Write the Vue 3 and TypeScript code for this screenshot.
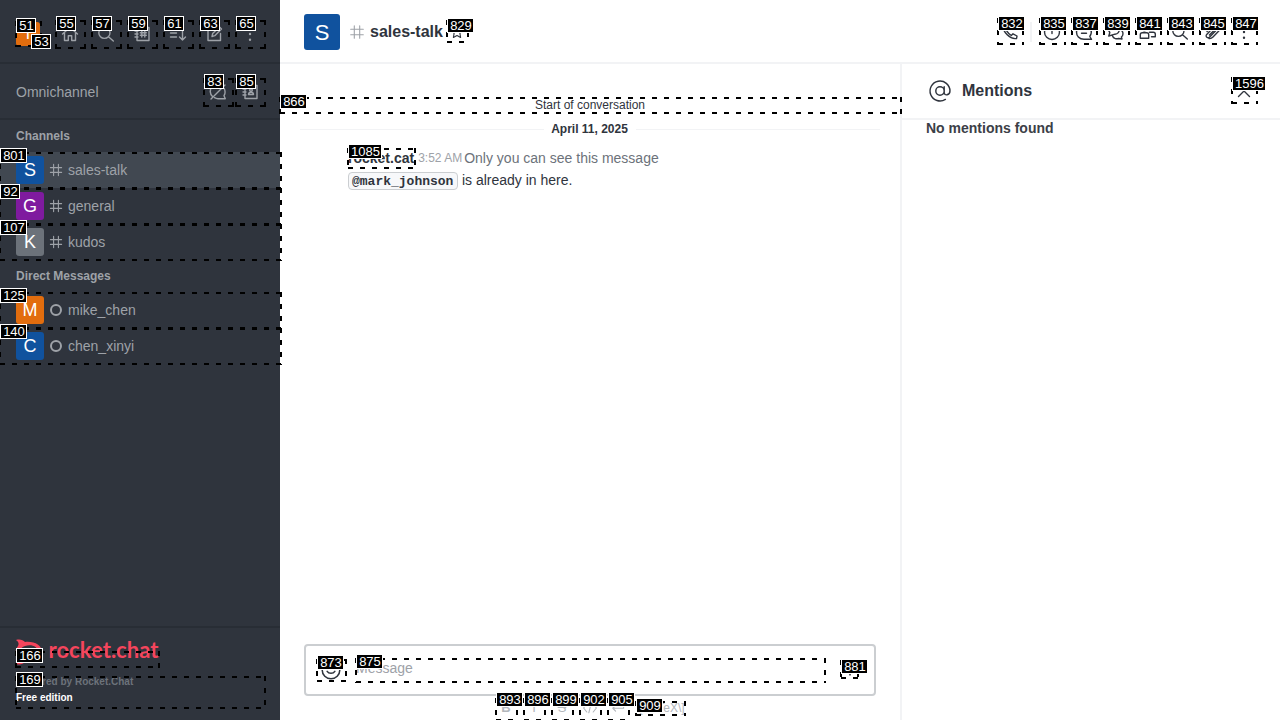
<script setup lang="ts">
interface Mark {
  id: number
  box: [number, number, number, number]
  tag: [number, number]
}

const marks: Mark[] = [
  { id: 51, box: [15, 21, 27, 26], tag: [16, 18] },
  { id: 53, box: [0, 0, 0, 0], tag: [31, 34] },
  ...[55, 57, 59, 61, 63, 65].map((id, i): Mark => ({ id, box: [55 + i * 36, 20, 31, 29], tag: [56 + i * 36, 16] })),
  { id: 83, box: [203, 78, 31, 29], tag: [204, 74] },
  { id: 85, box: [235, 78, 31, 29], tag: [236, 74] },
  { id: 801, box: [-1, 152, 283, 37], tag: [0, 148] },
  { id: 92, box: [-1, 188, 283, 37], tag: [0, 184] },
  { id: 107, box: [-1, 224, 283, 37], tag: [0, 220] },
  { id: 125, box: [-1, 292, 283, 37], tag: [0, 288] },
  { id: 140, box: [-1, 328, 283, 37], tag: [0, 324] },
  { id: 166, box: [15, 651, 145, 17], tag: [16, 648] },
  { id: 169, box: [15, 676, 251, 33], tag: [16, 672] },
  { id: 829, box: [446, 20, 23, 23], tag: [447, 18] },
  { id: 832, box: [997, 18, 27, 27], tag: [998, 16] },
  ...[835, 837, 839, 841, 843, 845, 847].map((id, i): Mark => ({ id, box: [1039 + i * 32, 18, 27, 27], tag: [1040 + i * 32, 16] })),
  { id: 866, box: [279, 97, 623, 17], tag: [280, 94] },
  { id: 1596, box: [1231, 77, 27, 27], tag: [1232, 76] },
  { id: 1085, box: [347, 148, 69, 21], tag: [348, 144] },
  { id: 873, box: [316, 659, 31, 23], tag: [317, 655] },
  { id: 875, box: [355, 658, 471, 25], tag: [356, 654] },
  { id: 881, box: [840, 660, 19, 19], tag: [841, 659] },
  ...[893, 896, 899, 902, 905].map((id, i): Mark => ({ id, box: [495 + i * 28, 698, 23, 23], tag: [496 + i * 28, 692] })),
  { id: 909, box: [635, 701, 51, 15], tag: [636, 698] },
]

const boxStyle = (m: Mark) => ({
  left: `${m.box[0]}px`, top: `${m.box[1]}px`, width: `${m.box[2]}px`, height: `${m.box[3]}px`,
})
const tagStyle = (m: Mark) => ({
  left: `${m.tag[0]}px`, top: `${m.tag[1]}px`, width: `${6 + String(m.id).length * 7}px`,
})

const icons: Record<string, string> = {
  home: 'M2.5 10 10 3.5 17.5 10M4.5 9v7.5h3.8v-4.8h3.4v4.8h3.8V9',
  search: 'M14 8.8a5.6 5.6 0 1 1-11.2 0 5.6 5.6 0 0 1 11.2 0zM12.5 12.8l4.8 4.2',
  directory: 'M5 3.5h12v13H5zM3 7h3M3 10h3M3 13h3M9.8 7v6M12.8 7v6M8.3 8.7h6M8.3 11.3h6',
  sort: 'M2.5 6h9M2.5 9h6M2.5 13h6M14.5 4v12M11.5 13l3 3 3-3',
  edit: 'M11 4H4v12.5h12.5V9.5M8 12.5l.7-3L15.5 3l2 2-6.7 6.7z',
  kebab: 'M10 4.2v.1M10 10v.1M10 15.7v.1',
  balloonOff: 'M4.5 14.5A7 7 0 0 1 14 4.2M16.2 6.5c1.5 3 .9 5.5-.2 7.2l1.3 3H10c-1.5 0-2.5-.4-3.5-1M3 17 17 3',
  contact: 'M5 3.5h12v13H5zM3 7h3M3 10h3M3 13h3M12.3 8a1.3 1.3 0 1 1-2.6 0 1.3 1.3 0 0 1 2.6 0zM8.5 12.5c0-3 5-3 5 0z',
  hash: 'M7 3v14M13 3v14M3 7h14M3 13h14',
  star: 'm10 3 2.2 4.6 5 .7-3.6 3.5.9 5L10 14.4l-4.5 2.4.9-5L2.8 8.3l5-.7z',
  phone: 'M3.5 3.5 6 3l2.2 4-1.7 1.7c1.2 2 2.7 3.5 4.8 4.8l1.7-1.7 4 2.2-.5 2.5c-6.5 1-14-6.5-13-13z',
  info: 'M17.5 10a7.5 7.5 0 1 1-15 0 7.5 7.5 0 0 1 15 0zM10 5.5v6',
  thread: 'M10 2.5c8 0 8.5 8 5.8 12l1.7 2.8H10c-10 0-10-14.8 0-14.8zM7.5 11.2h5',
  discussion: 'M8 3c6.5 0 7 9 1 9.2L2.8 14l1-3.5C1 7 4 3 8 3zM6.5 14c1 3 4.5 3 6 2.5l3.5.5-.6-2c2-1.5 2-4.5.6-6',
  team: 'M8.5 6.5a2.2 2.2 0 1 1-4.4 0 2.2 2.2 0 0 1 4.4 0zM15.5 6.2a2 2 0 1 1-4 0M2.3 16.3v-3.5c0-2 1-2 2-2h4.4c1.5 0 2 .5 2 2v3.5zM11.5 10.3h3.8c1.5 0 2 .5 2 2v2.5h-3.8',
  clip: 'm5 9.5 5.5-5.7c2.8-2.7 7 1 4.2 4l-7 7.2c-1.9 1.9-4.8-.6-3-2.6l6.4-6.6c1.3-1.2 3 .3 1.8 1.6l-5.5 5.7M7 16.5c2 .5 3-.5 4-1.5l6-6.2',
  at: 'M13.5 10a3.5 3.5 0 1 1-7 0 3.5 3.5 0 0 1 7 0zM13.5 6.5v4.8c0 3.2 4.8 2.2 4.8-1.3a8.3 8.3 0 1 0-3.8 7',
  cross: 'm4.5 4.5 11 11M15.5 4.5l-11 11',
  smile: 'M18 10a8 8 0 1 1-16 0 8 8 0 0 1 16 0zM7 7.5v.5M13 7.5V8M6.5 11.2c1.5 2.4 5.5 2.4 7 0',
  enter: 'M17 5.5v4.8H3.5M7 6.8l-3.5 3.5L7 13.8',
  code: 'M6 5 2 10l4 5M14 5l4 5-4 5M11.5 4l-3 12',
}
const topTools = ['home', 'search', 'directory', 'sort', 'edit', 'kebab']
const roomTools = ['info', 'thread', 'discussion', 'team', 'search', 'clip', 'kebab']
const channels = [
  { name: 'sales-talk', letter: 'S', tone: 'blue', active: true },
  { name: 'general', letter: 'G', tone: 'purple', active: false },
  { name: 'kudos', letter: 'K', tone: 'gray', active: false },
]
const people = [
  { name: 'mike_chen', letter: 'M', tone: 'orange' },
  { name: 'chen_xinyi', letter: 'C', tone: 'blue' },
]
</script>

<template>
  <div class="app">
    <aside class="sidebar">
      <div class="topbar">
        <div class="avatar me orange">T</div>
        <div class="tools">
          <span v-for="t in topTools" :key="t" class="tool"><svg class="icon" :class="{ dots: t === 'kebab' }" viewBox="0 0 20 20"><path :d="icons[t]" /></svg></span>
        </div>
      </div>
      <div class="omni">
        <span class="omni-name">Omnichannel</span>
        <span class="tool"><svg class="icon" viewBox="0 0 20 20"><path :d="icons.balloonOff" /></svg></span>
        <span class="tool"><svg class="icon" viewBox="0 0 20 20"><path :d="icons.contact" /></svg></span>
      </div>
      <nav class="rooms">
        <h3>Channels</h3>
        <div v-for="c in channels" :key="c.name" class="row" :class="{ active: c.active }">
          <div class="avatar" :class="c.tone">{{ c.letter }}</div>
          <svg class="hash" viewBox="0 0 20 20"><path :d="icons.hash" /></svg>
          <span>{{ c.name }}</span>
        </div>
        <h3>Direct Messages</h3>
        <div v-for="p in people" :key="p.name" class="row">
          <div class="avatar" :class="p.tone">{{ p.letter }}</div>
          <i class="offline"></i>
          <span>{{ p.name }}</span>
        </div>
      </nav>
      <footer class="brand">
        <svg class="logo" width="160" height="28" viewBox="0 0 160 28">
          <path class="rocket" d="M0 0c4-1 7 0 9 2 9-1 17 3 17 10s-8 11-17 10c-2 2-5 3-9 2 3-2 3-4 2-6-3-4-3-8 0-12 1-2 1-4-2-6zm9 6c-7 2-7 10 0 12 7 1 13-1 13-6s-6-8-13-6z" />
          <text x="32.5" y="18" textLength="110" lengthAdjust="spacingAndGlyphs">rocket.chat</text>
        </svg>
        <p class="powered">Powered by Rocket.Chat</p>
        <p class="edition">Free edition</p>
      </footer>
    </aside>

    <main class="main">
      <header class="room-head">
        <div class="avatar big blue">S</div>
        <svg class="icon head-hash" viewBox="0 0 20 20"><path :d="icons.hash" /></svg>
        <h1>sales-talk</h1>
        <svg class="star" viewBox="0 0 20 20"><path :d="icons.star" /></svg>
        <div class="room-tools">
          <span class="tool24"><svg class="icon" viewBox="0 0 20 20"><path :d="icons.phone" /></svg></span>
          <i class="sep"></i>
          <span v-for="t in roomTools" :key="t" class="tool24"><svg class="icon" :class="{ dots: t === 'kebab' }" viewBox="0 0 20 20"><path :d="icons[t]" /></svg></span>
        </div>
      </header>
      <div class="body">
        <section class="conversation">
          <div class="start">Start of conversation</div>
          <div class="date"><i></i><span>April 11, 2025</span><i></i></div>
          <article class="message">
            <div class="meta"><b>rocket.cat</b><time>3:52 AM</time><span>Only you can see this message</span></div>
            <div class="text"><code>@mark_johnson</code> is already in here.</div>
          </article>
          <div class="composer">
            <svg class="smile" viewBox="0 0 20 20"><path :d="icons.smile" /></svg>
            <span class="placeholder">Message</span>
            <svg class="more" viewBox="0 0 20 20"><path :d="icons.kebab" /></svg>
          </div>
          <div class="format">
            <span class="f bold">B</span><span class="f">I</span><span class="f strike">S</span>
            <span class="f"><svg viewBox="0 0 20 20"><path :d="icons.code" /></svg></span>
            <span class="f"><svg viewBox="0 0 20 20"><path :d="icons.enter" /></svg></span>
            <span class="katex">\[KaTeX\]</span>
          </div>
        </section>
        <aside class="panel">
          <header class="panel-head">
            <svg class="at" viewBox="0 0 20 20"><path :d="icons.at" /></svg>
            <h2>Mentions</h2>
            <svg class="icon" viewBox="0 0 20 20"><path :d="icons.cross" /></svg>
          </header>
          <p class="empty">No mentions found</p>
        </aside>
      </div>
    </main>

    <div class="marks">
      <template v-for="m in marks" :key="m.id">
        <div v-if="m.box[2]" class="mark" :style="boxStyle(m)"></div>
      </template>
      <div v-for="m in marks" :key="m.id" class="tag" :style="tagStyle(m)">{{ m.id }}</div>
    </div>
  </div>
</template>

<style>
body { margin: 0; overflow: hidden; }
</style>

<style scoped>
* { box-sizing: border-box; }
h1, h2, h3, p { margin: 0; }
.app { position: relative; display: flex; width: 1280px; height: 720px; overflow: hidden; background: #fff; color: #2f343d; font: 14px/20px "Liberation Sans", Arial, sans-serif; }
.sidebar { display: flex; flex-direction: column; width: 280px; flex: none; background: #2f343d; color: #9ea2a8; }
svg { display: block; flex: none; fill: none; stroke: currentColor; stroke-width: 1.4; stroke-linecap: round; stroke-linejoin: round; }
.icon { width: 20px; height: 20px; }
.dots { stroke-width: 2.4; }
.topbar { display: flex; align-items: center; height: 64px; padding: 6px 16px 0; border-bottom: 2px solid #282d35; }
.tools { display: flex; gap: 8px; margin-left: 16px; }
.tool { display: flex; align-items: center; justify-content: center; width: 28px; height: 28px; }
.avatar { display: flex; align-items: center; justify-content: center; flex: none; width: 28px; height: 28px; border-radius: 3px; color: #fff; font-size: 18px; line-height: 28px; }
.me { width: 24px; height: 24px; font-size: 16px; }
.big { width: 36px; height: 36px; padding-top: 1px; font-size: 22px; }
.orange { background: #e26d0e; }
.blue { background: #10529e; }
.purple { background: #7f1b9f; }
.gray { background: #6c727a; }
.omni { display: flex; align-items: center; height: 56px; padding: 2px 16px 0; gap: 4px; border-bottom: 2px solid #282d35; }
.omni-name { flex: 1; }
.rooms { flex: 1; }
h3 { height: 32px; padding: 0 16px; font-size: 12px; line-height: 32px; }
.row { display: flex; align-items: center; height: 36px; padding-left: 16px; }
.active { background: #414851; }
.row span { margin-left: 4px; }
.hash { width: 16px; height: 16px; margin-left: 4px; }
.offline { width: 12px; height: 12px; margin: 0 2px 0 6px; border: 2px solid #9ea2a8; border-radius: 50%; }
.brand { height: 94px; padding: 12px 16px 0; border-top: 2px solid #282d35; font-size: 10px; font-weight: bold; line-height: 16px; }
.logo { overflow: visible; stroke: none; fill: #f5455c; font: 700 22px/1 Lato, sans-serif; }
.powered { margin-top: 6px; color: #6c727a; }
.edition { color: #fff; }
.main { display: flex; flex-direction: column; flex: 1; min-width: 0; }
.room-head { display: flex; align-items: center; height: 64px; padding: 2px 24px 0; border-bottom: 2px solid #f2f3f5; }
.head-hash { width: 18px; height: 18px; margin-left: 8px; color: #9ea2a8; stroke-width: 1.2; }
h1, h2 { font-size: 16px; line-height: 24px; }
h1 { margin-left: 4px; }
.star { width: 16px; height: 16px; margin-left: 6px; }
.room-tools { display: flex; align-items: center; gap: 8px; margin-left: auto; }
.tool24 { display: flex; align-items: center; justify-content: center; width: 24px; height: 24px; }
.sep { width: 2px; height: 20px; background: #f2f3f5; }
.room-tools .sep { margin: 0 -1px; }
.room-tools .sep { margin: 0; }
.body { display: flex; flex: 1; min-height: 0; }
.conversation { display: flex; flex-direction: column; width: 620px; flex: none; }
.start { margin-top: 33px; font-size: 12px; line-height: 16px; text-align: center; }
.date { display: flex; align-items: center; gap: 8px; margin-top: 8px; padding: 0 20px; font-size: 12px; font-weight: bold; line-height: 16px; }
.date span { margin-left: -1px; }
.date i { flex: 1; height: 1px; background: #f2f3f5; }
.message { margin-top: 11px; padding-left: 68px; }
.meta { display: flex; align-items: center; height: 20px; color: #6c727a; }
.meta b { color: #2f343d; }
.meta time { margin: 0 2px 0 4px; color: #9ea2a8; font-size: 12px; }
.text { margin-top: 2px; height: 22px; line-height: 20px; }
code { display: inline-block; width: 110px; height: 18px; padding: 0 3px; border: 1px solid #cbced1; border-radius: 4px; background: #f7f8fa; font: bold 13px/17px "Liberation Mono", monospace; vertical-align: middle; }
.composer { display: flex; align-items: center; height: 52px; margin: auto 24px 0; padding: 0 16px 0 14px; border: 2px solid #cbced1; border-radius: 4px; }
.smile { width: 22px; height: 22px; }
.placeholder { flex: 1; margin: -4px 0 0 14px; color: #9ea2a8; }
.more { width: 16px; height: 16px; stroke-width: 2.2; }
.format { display: flex; height: 24px; padding: 2px 0 0 216px; gap: 8px; color: #b2b6bb; }
.f { display: flex; align-items: center; justify-content: center; width: 20px; height: 20px; font-size: 13px; }
.f svg { width: 16px; height: 16px; }
.bold { font-weight: bold; }
.strike { text-decoration: line-through; }
.katex { font-size: 12px; line-height: 20px; }
.panel { flex: 1; border-left: 2px solid #f2f3f5; }
.panel-head { display: flex; align-items: center; height: 56px; padding: 0 26px; border-bottom: 2px solid #f2f3f5; }
.at { width: 24px; height: 24px; stroke-width: 1.2; }
h2 { flex: 1; margin-left: 10px; }
.empty { padding: 0 24px; line-height: 16px; font-weight: bold; color: #3c4047; }
.marks { position: absolute; inset: 0; }
.mark {
  --dash: #000 0 5px, transparent 5px 12px;
  position: absolute;
  background-image:
    linear-gradient(90deg, var(--dash)), linear-gradient(90deg, var(--dash)),
    linear-gradient(180deg, var(--dash)), linear-gradient(180deg, var(--dash));
  background-size: 12px 2px, 12px 2px, 2px 12px, 2px 12px;
  background-position: 1px 0, 1px 100%, 0 0, 100% 0;
  background-repeat: repeat-x, repeat-x, repeat-y, repeat-y;
}
.tag { position: absolute; height: 15px; padding-left: 1px; border: 1px solid #fff; background: #000; color: #fff; font-size: 13px; line-height: 13px; text-align: center; }
</style>
